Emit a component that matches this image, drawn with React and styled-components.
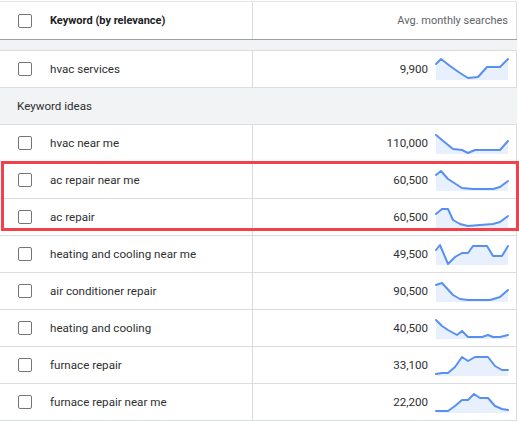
import React from "react";
import styled, { createGlobalStyle } from "styled-components";

const Global = createGlobalStyle`
  html, body { margin: 0; padding: 0; background: #fff; }
  body { font-family: Roboto, "Noto Sans", Arial, sans-serif; }
`;

const Page = styled.div`
  position: relative;
  width: 519px;
  height: 421px;
  overflow: hidden;
  padding-top: 1px;
  box-sizing: border-box;
`;

const Table = styled.div`
  width: 517px;
  border-top: 1px solid #e6e6e6;
`;

const Row = styled.div`
  display: grid;
  grid-template-columns: 253px 264px;
  height: ${(p) => p.$h || 37}px;
  box-sizing: border-box;
  border-bottom: 1px solid ${(p) => (p.$dark ? "#9aa0a6" : "#dadce0")};
  font-size: ${(p) => (p.$head ? 11 : 11.6)}px;
`;

const KeyCell = styled.div`
  display: flex;
  align-items: center;
  border-right: 1px solid #dadce0;
  padding-left: 18px;
  gap: 18px;
  color: ${(p) => (p.$bold ? "#202124" : "#2e2f31")};
  font-weight: ${(p) => (p.$bold ? 700 : 400)};
`;

const ValueCell = styled.div`
  display: flex;
  align-items: center;
  justify-content: flex-end;
  border-right: 1px solid #dadce0;
  padding-right: 8px;
  gap: 8px;
  color: ${(p) => (p.$muted ? "#5f6368" : "#2e2f31")};
`;

const Spacer = styled.div`
  height: 10px;
  background: #f1f3f4;
  border-bottom: 1px solid #dadce0;
  width: 517px;
`;

const Band = styled.div`
  height: 37px;
  box-sizing: border-box;
  background: #f1f3f4;
  border-bottom: 1px solid #dadce0;
  display: flex;
  align-items: center;
  padding-left: 17px;
  padding-bottom: 1px;
  font-size: 11.6px;
  color: #2e2f31;
`;

const Check = styled.span`
  width: 14px;
  height: 14px;
  box-sizing: border-box;
  border: 1.5px solid #757575;
  border-radius: 2px;
  flex: none;
`;

const Label = styled.span`
  padding-bottom: 1px;
`;

const Highlight = styled.div`
  position: absolute;
  left: 1px;
  top: 161px;
  width: 518px;
  height: 70px;
  box-sizing: border-box;
  border: 3px solid #f2414a;
  pointer-events: none;
`;

const Spark = ({ pts }) => {
  const line = pts.map((p) => p.join(",")).join(" ");
  const area = `0,22 ${line} 72,22`;
  return (
    <svg width="72" height="22" viewBox="0 0 72 22" style={{ display: "block", overflow: "visible" }}>
      <polygon points={area} fill="#e8f0fe" />
      <polyline points={line} fill="none" stroke="#5790f2" strokeWidth="2" strokeLinejoin="round" strokeLinecap="round" />
    </svg>
  );
};

const ideas = [
  ["hvac near me", "110,000", [[0,3],[6,8],[17,17],[26,18],[32,21],[39,18],[64,18],[72,9]]],
  ["ac repair near me", "60,500", [[0,6],[5,2],[12,10],[26,19],[37,20],[57,20],[64,18],[72,12]]],
  ["ac repair", "60,500", [[0,8],[6,3],[12,3],[17,14],[24,18],[32,20],[44,19],[57,18],[64,16],[72,10]]],
  ["heating and cooling near me", "49,500", [[0,7],[4,2],[12,21],[19,14],[26,10],[32,10],[37,3],[51,3],[57,13],[66,13],[72,3]]],
  ["air conditioner repair", "90,500", [[0,5],[6,3],[17,15],[24,19],[32,20],[54,20],[64,17],[72,10]]],
  ["heating and cooling", "40,500", [[0,3],[6,9],[12,13],[21,18],[26,14],[32,20],[46,20],[52,18],[57,20],[64,20],[72,18]]],
  ["furnace repair", "33,100", [[0,20],[6,19],[12,19],[19,13],[26,3],[32,7],[39,3],[52,3],[59,12],[66,16],[72,16]]],
  ["furnace repair near me", "22,200", [[0,20],[12,20],[19,15],[26,9],[32,9],[38,3],[44,7],[52,7],[59,15],[66,18],[72,19]]],
];

const DataRow = ({ kw, val, pts }) => (
  <Row>
    <KeyCell>
      <Check />
      <Label>{kw}</Label>
    </KeyCell>
    <ValueCell>
      <Label>{val}</Label>
      <Spark pts={pts} />
    </ValueCell>
  </Row>
);

export default function App() {
  return (
    <Page>
      <Global />
      <Table>
        <Row $h={38} $dark $head>
          <KeyCell $bold>
            <Check />
            <Label>Keyword (by relevance)</Label>
          </KeyCell>
          <ValueCell $muted>
            <Label>Avg. monthly searches</Label>
          </ValueCell>
        </Row>
        <Spacer />
        <DataRow kw="hvac services" val="9,900" pts={[[0,6],[5,1],[14,8],[24,15],[32,20],[42,19],[51,9],[64,9],[72,1]]} />
        <Band>Keyword ideas</Band>
        {ideas.map(([kw, val, pts]) => (
          <DataRow key={kw} kw={kw} val={val} pts={pts} />
        ))}
      </Table>
      <Highlight />
    </Page>
  );
}
